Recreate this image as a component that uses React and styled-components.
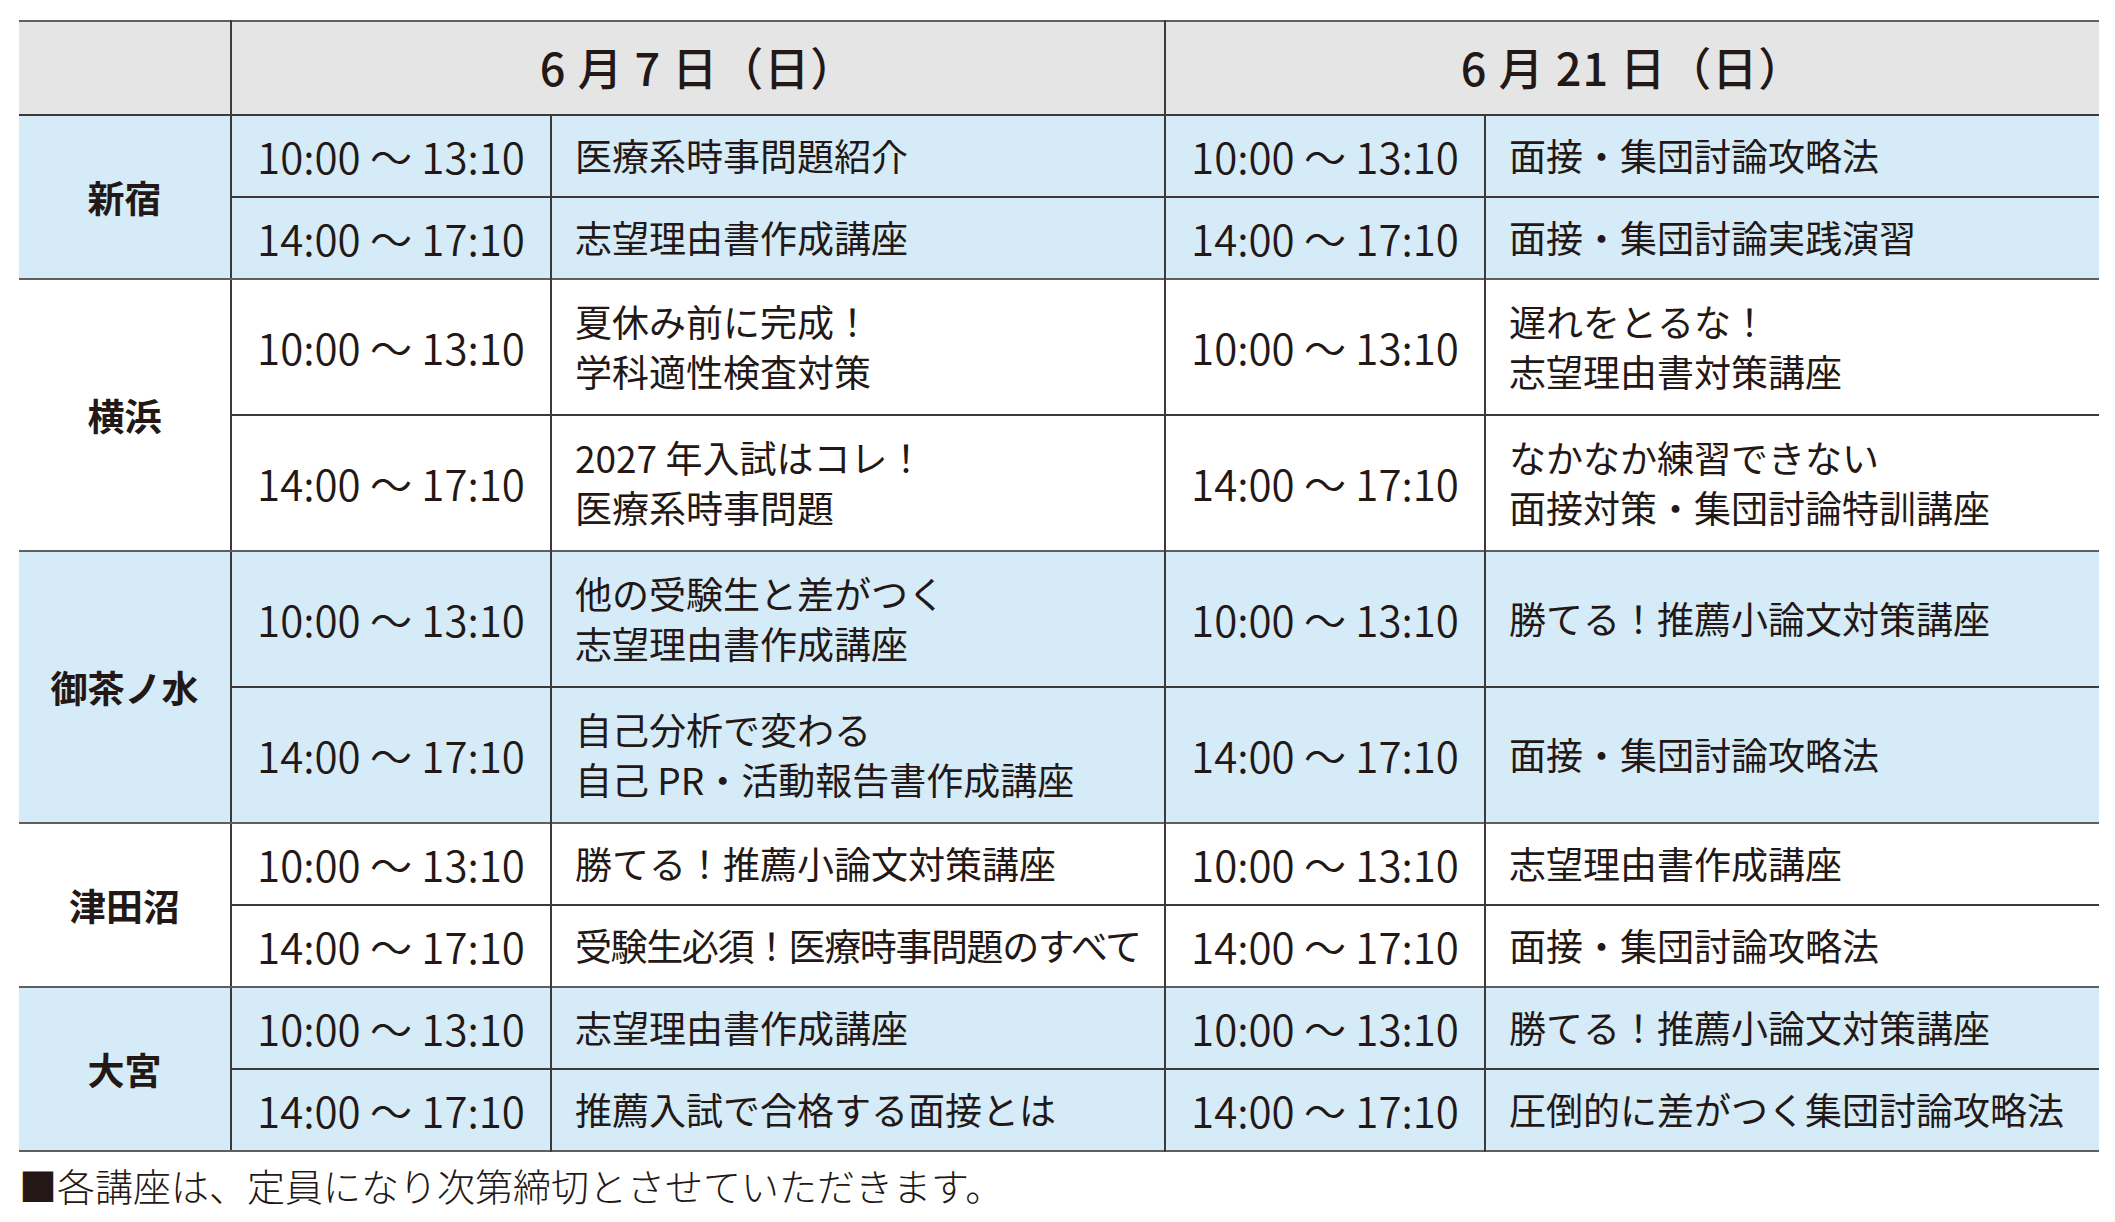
import styled, { createGlobalStyle } from "styled-components"

const GlobalStyle = createGlobalStyle`
  html, body {
    margin: 0;
    padding: 0;
    background: #ffffff;
  }
  body {
    font-family: "Noto Sans CJK JP", "Noto Sans", sans-serif;
    color: #231815;
  }
`

const schedule = [
  {
    place: "新宿",
    shade: true,
    tall: false,
    rows: [
      ["10:00 ～ 13:10", ["医療系時事問題紹介"], "10:00 ～ 13:10", ["面接・集団討論攻略法"]],
      ["14:00 ～ 17:10", ["志望理由書作成講座"], "14:00 ～ 17:10", ["面接・集団討論実践演習"]],
    ],
  },
  {
    place: "横浜",
    shade: false,
    tall: true,
    rows: [
      ["10:00 ～ 13:10", ["夏休み前に完成！", "学科適性検査対策"], "10:00 ～ 13:10", ["遅れをとるな！", "志望理由書対策講座"]],
      ["14:00 ～ 17:10", ["2027 年入試はコレ！", "医療系時事問題"], "14:00 ～ 17:10", ["なかなか練習できない", "面接対策・集団討論特訓講座"]],
    ],
  },
  {
    place: "御茶ノ水",
    shade: true,
    tall: true,
    rows: [
      ["10:00 ～ 13:10", ["他の受験生と差がつく", "志望理由書作成講座"], "10:00 ～ 13:10", ["勝てる！推薦小論文対策講座"]],
      ["14:00 ～ 17:10", ["自己分析で変わる", "自己 PR・活動報告書作成講座"], "14:00 ～ 17:10", ["面接・集団討論攻略法"]],
    ],
  },
  {
    place: "津田沼",
    shade: false,
    tall: false,
    rows: [
      ["10:00 ～ 13:10", ["勝てる！推薦小論文対策講座"], "10:00 ～ 13:10", ["志望理由書作成講座"]],
      ["14:00 ～ 17:10", ["受験生必須！医療時事問題のすべて"], "14:00 ～ 17:10", ["面接・集団討論攻略法"]],
    ],
  },
  {
    place: "大宮",
    shade: true,
    tall: false,
    rows: [
      ["10:00 ～ 13:10", ["志望理由書作成講座"], "10:00 ～ 13:10", ["勝てる！推薦小論文対策講座"]],
      ["14:00 ～ 17:10", ["推薦入試で合格する面接とは"], "14:00 ～ 17:10", ["圧倒的に差がつく集団討論攻略法"]],
    ],
  },
]

// long titles are squeezed a little so they fit the cell, as in print
const isLong = (lines) => lines.some((l) => l.length > 15)

export default function App() {
  return (
    <Page>
      <GlobalStyle />
      <Table>
        <colgroup>
          <col style={{ width: 212 }} />
          <col style={{ width: 320 }} />
          <col style={{ width: 614 }} />
          <col style={{ width: 320 }} />
          <col style={{ width: 614 }} />
        </colgroup>
        <thead>
          <HeadRow>
            <HeadCell />
            <HeadCell colSpan={2}>6 月 7 日（日）</HeadCell>
            <HeadCell colSpan={2}>6 月 21 日（日）</HeadCell>
          </HeadRow>
        </thead>
        {schedule.map((block) => (
          <Block key={block.place} $shade={block.shade}>
            {block.rows.map((row, i) => (
              <Row key={i} $tall={block.tall} $last={i === block.rows.length - 1}>
                {i === 0 && <PlaceCell rowSpan={2}>{block.place}</PlaceCell>}
                <TimeCell>{row[0]}</TimeCell>
                <TitleCell $tight={isLong(row[1])}>
                  {row[1].map((line) => (
                    <Line key={line}>{line}</Line>
                  ))}
                </TitleCell>
                <TimeCell>{row[2]}</TimeCell>
                <TitleCell $tight={isLong(row[3])}>
                  {row[3].map((line) => (
                    <Line key={line}>{line}</Line>
                  ))}
                </TitleCell>
              </Row>
            ))}
          </Block>
        ))}
      </Table>
      <Note>■各講座は、定員になり次第締切とさせていただきます。</Note>
    </Page>
  )
}

const Page = styled.div`
  padding: 20px 16px 0 19px;
  width: 2080px;
`

const Table = styled.table`
  width: 2080px;
  border-collapse: collapse;
  table-layout: fixed;
  border-top: 2px solid #5f5f5f;
  border-bottom: 2px solid #5f5f5f;
`

const HeadRow = styled.tr`
  height: 94px;
  background: #e5e5e5;
`

const HeadCell = styled.th`
  border-left: 2px solid #3e3a39;
  border-bottom: 2px solid #3e3a39;
  font-size: 45px;
  font-weight: 500;
  letter-spacing: 1px;
  text-align: center;
  vertical-align: middle;
  padding: 0 0 4px;
  color: #231815;

  &:first-child {
    border-left: none;
  }
`

const Block = styled.tbody`
  background: ${(p) => (p.$shade ? "#d5ebf8" : "#ffffff")};
  border-bottom: 2px solid #5f5f5f;
`

const Row = styled.tr`
  height: ${(p) => (p.$tall ? "136px" : "82px")};
  border-bottom: ${(p) => (p.$last ? "none" : "2px solid #3e3a39")};
`

const PlaceCell = styled.td`
  font-size: 37px;
  font-weight: 700;
  text-align: center;
  vertical-align: middle;
  padding: 0;
  border-bottom: 2px solid #5f5f5f;
`

const TimeCell = styled.td`
  border-left: 2px solid #3e3a39;
  font-size: 42px;
  font-weight: 350;
  text-align: center;
  vertical-align: middle;
  white-space: nowrap;
  padding: 0 0 2px;
`

const TitleCell = styled.td`
  border-left: 2px solid #3e3a39;
  font-size: 37px;
  font-weight: 400;
  text-align: left;
  vertical-align: middle;
  padding: 0 0 2px 23px;
  line-height: 50px;
  white-space: nowrap;
  letter-spacing: ${(p) => (p.$tight ? "-1.4px" : "0")};
`

const Line = styled.div`
  display: block;
`

const Note = styled.p`
  margin: 8px 0 0;
  font-size: 38px;
  font-weight: 300;
  line-height: 50px;
`
